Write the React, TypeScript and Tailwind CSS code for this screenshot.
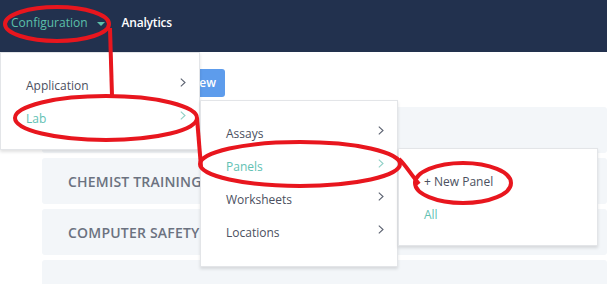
import React from "react"

// ─── Data ─────────────────────────────────────────────────────────────────────

type MenuItem = { label: string; active?: boolean; sub?: boolean }

const topMenu: MenuItem[] = [
  { label: "Application", sub: true },
  { label: "Lab", active: true, sub: true },
]

const labMenu: MenuItem[] = [
  { label: "Assays", sub: true },
  { label: "Panels", active: true, sub: true },
  { label: "Worksheets", sub: true },
  { label: "Locations", sub: true },
]

const panelMenu: MenuItem[] = [
  { label: "+ New Panel" },
  { label: "All", active: true },
]

const rows = ["", "Chemist Training", "Computer Safety", ""]

// ─── Chevron ──────────────────────────────────────────────────────────────────

function Chevron({ active }: { active?: boolean }) {
  return (
    <svg
      width="6"
      height="9"
      viewBox="0 0 6 9"
      className="mb-[6px] shrink-0"
      fill="none"
      stroke={active ? "#8fd0c6" : "#5b6170"}
      strokeWidth="1.1"
    >
      <polyline points="0.8,0.6 5,4.5 0.8,8.4" />
    </svg>
  )
}

// ─── Dropdown ─────────────────────────────────────────────────────────────────

function Dropdown({
  items,
  className,
}: {
  items: MenuItem[]
  className: string
}) {
  return (
    <div
      className={`absolute flex flex-col border border-[#e3e5e8] bg-white pt-[16px] pb-[14px] shadow-[0_2px_3px_rgba(0,0,0,0.12)] ${className}`}
    >
      {items.map((item) => (
        <div
          key={item.label}
          className="flex h-[33px] items-center justify-between pr-[13px] pl-[25px] text-[12px]"
        >
          <span className={item.active ? "text-[#62c1b3]" : "text-[#4b5060]"}>
            {item.label}
          </span>
          {item.sub && <Chevron active={item.active} />}
        </div>
      ))}
    </div>
  )
}

// ─── Annotations ──────────────────────────────────────────────────────────────

function Annotations() {
  return (
    <svg
      className="pointer-events-none absolute inset-0"
      width="607"
      height="284"
      viewBox="0 0 607 284"
      fill="none"
      stroke="#e8161e"
      strokeWidth="4"
    >
      <ellipse cx="57" cy="24" rx="52" ry="17" />
      <path d="M110 28 L112 96" />
      <ellipse cx="106" cy="118" rx="91" ry="22" />
      <path d="M197 118 L201 167" />
      <ellipse cx="300" cy="164" rx="100" ry="22" />
      <path d="M399 159 C404 163 410 173 419 184" />
      <ellipse cx="463" cy="183" rx="48" ry="20" />
    </svg>
  )
}

// ─── App ──────────────────────────────────────────────────────────────────────

export default function App() {
  return (
    <div className="relative h-[284px] w-[607px] overflow-hidden bg-white font-['Open_Sans',sans-serif]">
      <nav className="flex h-[52px] items-center gap-[17px] bg-[#22314e] pb-[7px] pl-[11px] text-[12px]">
        <div className="flex items-center gap-[9px] text-[#5cc0aa]">
          Configuration
          <span className="mt-[2px] h-0 w-0 border-x-[4px] border-t-[4px] border-x-transparent border-t-[#5cc0aa]" />
        </div>
        <span className="font-semibold tracking-[-0.2px] text-white">Analytics</span>
      </nav>

      <main className="pt-[17px] pl-[42px]">
        <div className="flex w-[183px] justify-end">
          <button className="h-[28px] rounded-[3px] bg-[#5d9cec] px-[9px] text-[12px] font-semibold text-white">
            + New
          </button>
        </div>
        <div className="mt-[10px] flex flex-col gap-[5px]">
          {rows.map((r, i) => (
            <div
              key={i}
              className="flex h-[46px] w-[565px] items-center rounded-[3px] bg-[#f3f6f9] pl-[26px] text-[14px] font-semibold tracking-[0.2px] text-[#6b7280] uppercase"
            >
              {r}
            </div>
          ))}
        </div>
      </main>

      <Dropdown items={topMenu} className="top-[52px] left-0 w-[200px]" />
      <Dropdown items={labMenu} className="top-[100px] left-[200px] h-[167px] w-[198px]" />
      <Dropdown items={panelMenu} className="top-[148px] left-[398px] w-[200px]" />

      <Annotations />
    </div>
  )
}
